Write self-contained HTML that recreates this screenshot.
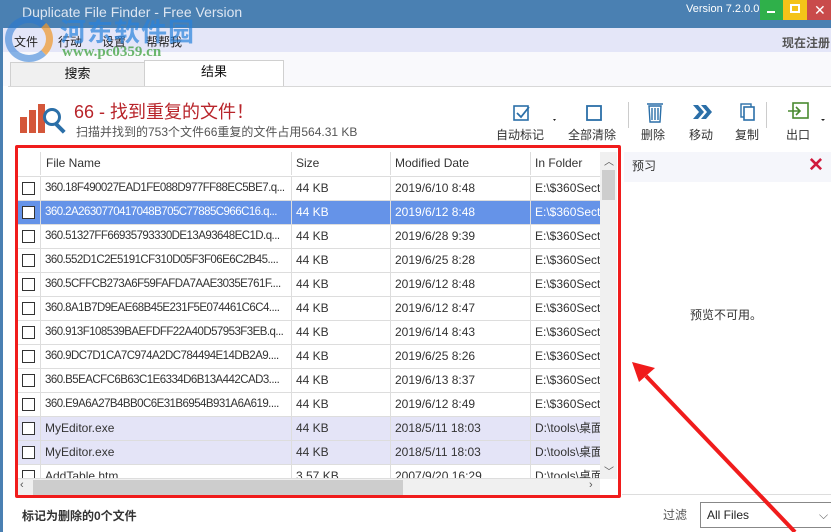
<!DOCTYPE html>
<html><head><meta charset="utf-8"><style>
*{margin:0;padding:0;box-sizing:border-box}
body{width:831px;height:532px;overflow:hidden;position:relative;background:#fff;font-family:"Liberation Sans","Noto Sans CJK SC",sans-serif;font-size:12px;color:#333}
.a{position:absolute;white-space:nowrap}
.row{position:absolute;left:18px;width:582px;height:24px;border-bottom:1px solid #ddd;font-size:12px;color:#333}
.row div{position:absolute;top:0;height:23px;line-height:23px;border-right:1px solid #ddd;overflow:hidden;padding-left:4px}
.cb{left:0;width:23px}.cb i{position:absolute;left:4px;top:5px;width:13px;height:13px;border:1px solid #333;background:#fff}
.c1{left:23px;width:251px;font-size:11.5px;letter-spacing:-0.55px}.c2{left:274px;width:99px}.c3{left:373px;width:140px}.c4{left:513px;width:80px;border-right:none!important}
.sel{background:#6593e8;color:#fff}.lav{background:#e4e4f7}
</style></head><body>
<div class="a" style="left:0;top:0;width:831px;height:28px;background:#4a80b2"></div>
<div class="a" style="left:22px;top:4px;font-size:14px;color:#dde6f2">Duplicate File Finder - Free Version</div>
<div class="a" style="left:686px;top:3px;font-size:11px;color:#fff">Version 7.2.0.0</div>
<div class="a" style="left:760px;top:0;width:23px;height:20px;background:#2fb04a"><div class="a" style="left:7px;top:11px;width:8px;height:2px;background:#fff"></div></div>
<div class="a" style="left:783px;top:0;width:24px;height:20px;background:#f4c318"><div class="a" style="left:7px;top:4px;width:10px;height:9px;border:2px solid #fff"></div></div>
<div class="a" style="left:807px;top:0;width:24px;height:20px;background:#c94b4b;color:#fff;font-size:14px;line-height:20px;padding-left:7px">✕</div>
<div class="a" style="left:0;top:28px;width:831px;height:24px;background:#e4e6f8"></div>
<div class="a" style="left:14px;top:33px;font-size:12px;color:#222">文件&nbsp;&nbsp;&nbsp;&nbsp;&nbsp;&nbsp;行动&nbsp;&nbsp;&nbsp;&nbsp;&nbsp;&nbsp;设置&nbsp;&nbsp;&nbsp;&nbsp;&nbsp;&nbsp;帮帮我</div>
<div class="a" style="left:782px;top:34px;font-size:12px;font-weight:bold;color:#555">现在注册</div>
<div class="a" style="left:0;top:52px;width:831px;height:34px;background:#f9f9fc"></div>
<div class="a" style="left:10px;top:62px;width:135px;height:25px;background:#f0f0f0;border:1px solid #d0d0d0;text-align:center;line-height:22px;font-size:13px;color:#111">搜索</div>
<div class="a" style="left:144px;top:60px;width:140px;height:27px;background:#fff;border:1px solid #d0d0d0;border-bottom:none;text-align:center;line-height:22px;font-size:13px;color:#111">结果</div>
<div class="a" style="left:8px;top:86px;width:823px;height:1px;background:#d8d8d8"></div>
<div class="a" style="left:0;top:0;width:3px;height:532px;background:#4a80b2"></div>
<!-- watermark -->
<div class="a" style="left:5px;top:16px;width:48px;height:46px;border-radius:50%;border:7px solid rgba(40,120,210,.55);border-right-color:rgba(240,150,40,.7)"></div>
<div class="a" style="left:60px;top:12px;font-size:26px;font-weight:bold;color:rgba(40,130,220,.7);letter-spacing:1px">河东软件园</div>
<div class="a" style="left:62px;top:44px;font-size:15px;font-weight:bold;color:rgba(60,160,60,.75);font-family:'Liberation Serif',serif">www.pc0359.cn</div>
<!-- logo -->
<div class="a" style="left:20px;top:117px;width:7px;height:16px;background:#d4573a"></div>
<div class="a" style="left:29px;top:110px;width:7px;height:23px;background:#d4573a"></div>
<div class="a" style="left:38px;top:104px;width:7px;height:29px;background:#d4573a"></div>
<div class="a" style="left:43px;top:108px;width:18px;height:18px;border-radius:50%;border:3px solid #2b6fa8;background:#fff"></div>
<div class="a" style="left:58px;top:122px;width:4px;height:12px;background:#2b6fa8;transform:rotate(-45deg)"></div>
<div class="a" style="left:74px;top:98px;font-size:18px;color:#b8242a">66 - 找到重复的文件！</div>
<div class="a" style="left:76px;top:123px;font-size:12px;color:#555">扫描并找到的753个文件66重复的文件占用564.31 KB</div>
<!-- toolbar -->
<svg class="a" style="left:510px;top:102px" width="320" height="26" viewBox="0 0 320 26">
<rect x="4" y="4" width="14" height="14" fill="none" stroke="#2b6fa8" stroke-width="1.6"/><path d="M7 11l4 4 8-10" fill="none" stroke="#2b6fa8" stroke-width="1.8"/>
<path d="M43 17l3 0-1.5 2z" fill="#222"/>
<rect x="77" y="4" width="14" height="14" fill="none" stroke="#2b6fa8" stroke-width="1.8"/>
<rect x="118" y="-2" width="1" height="30" fill="#ccc"/>
<path d="M137 2h16M139 4l1 16h10l1-16z M142 6v12M145 6v12M148 6v12" fill="none" stroke="#2b6fa8" stroke-width="1.4"/>
<path d="M183 3l6 7-6 7h5l6-7-6-7zM191 3l6 7-6 7h5l6-7-6-7z" fill="#2b6fa8"/>
<rect x="231" y="2" width="10" height="13" fill="none" stroke="#2b6fa8" stroke-width="1.4"/><rect x="234" y="5" width="10" height="13" fill="#fff" stroke="#2b6fa8" stroke-width="1.6"/>
<rect x="256" y="-2" width="1" height="30" fill="#ccc"/>
<rect x="283" y="1" width="15" height="15" fill="none" stroke="#4a8a30" stroke-width="1.6"/><path d="M278 9h11M286 5l4 4-4 4" fill="none" stroke="#4a8a30" stroke-width="1.6"/>
<path d="M311 17l4 0-2 2z" fill="#222"/>
</svg>
<div class="a" style="left:496px;top:126px;font-size:12px;color:#333">自动标记</div>
<div class="a" style="left:568px;top:126px;font-size:12px;color:#333">全部清除</div>
<div class="a" style="left:641px;top:126px;font-size:12px;color:#333">删除</div>
<div class="a" style="left:689px;top:126px;font-size:12px;color:#333">移动</div>
<div class="a" style="left:735px;top:126px;font-size:12px;color:#333">复制</div>
<div class="a" style="left:786px;top:126px;font-size:12px;color:#333">出口</div>
<!-- table -->
<div class="a" style="left:18px;top:152px;width:582px;height:25px;background:#fff;border-bottom:1px solid #ddd"></div>
<div class="row" style="top:152px;height:25px"><div class="cb"></div><div class="c1" style="padding-left:5px;font-size:12px;letter-spacing:0">File Name</div><div class="c2">Size</div><div class="c3">Modified Date</div><div class="c4">In Folder</div></div>
<div class="row" style="top:177px"><div class="cb"><i></i></div><div class="c1">360.18F490027EAD1FE088D977FF88EC5BE7.q...</div><div class="c2">44 KB</div><div class="c3">2019/6/10 8:48</div><div class="c4">E:\$360Section</div></div>
<div class="row sel" style="top:201px"><div class="cb"><i></i></div><div class="c1">360.2A2630770417048B705C77885C966C16.q...</div><div class="c2">44 KB</div><div class="c3">2019/6/12 8:48</div><div class="c4">E:\$360Section</div></div>
<div class="row" style="top:225px"><div class="cb"><i></i></div><div class="c1">360.51327FF66935793330DE13A93648EC1D.q...</div><div class="c2">44 KB</div><div class="c3">2019/6/28 9:39</div><div class="c4">E:\$360Section</div></div>
<div class="row" style="top:249px"><div class="cb"><i></i></div><div class="c1">360.552D1C2E5191CF310D05F3F06E6C2B45....</div><div class="c2">44 KB</div><div class="c3">2019/6/25 8:28</div><div class="c4">E:\$360Section</div></div>
<div class="row" style="top:273px"><div class="cb"><i></i></div><div class="c1">360.5CFFCB273A6F59FAFDA7AAE3035E761F....</div><div class="c2">44 KB</div><div class="c3">2019/6/12 8:48</div><div class="c4">E:\$360Section</div></div>
<div class="row" style="top:297px"><div class="cb"><i></i></div><div class="c1">360.8A1B7D9EAE68B45E231F5E074461C6C4....</div><div class="c2">44 KB</div><div class="c3">2019/6/12 8:47</div><div class="c4">E:\$360Section</div></div>
<div class="row" style="top:321px"><div class="cb"><i></i></div><div class="c1">360.913F108539BAEFDFF22A40D57953F3EB.q...</div><div class="c2">44 KB</div><div class="c3">2019/6/14 8:43</div><div class="c4">E:\$360Section</div></div>
<div class="row" style="top:345px"><div class="cb"><i></i></div><div class="c1">360.9DC7D1CA7C974A2DC784494E14DB2A9....</div><div class="c2">44 KB</div><div class="c3">2019/6/25 8:26</div><div class="c4">E:\$360Section</div></div>
<div class="row" style="top:369px"><div class="cb"><i></i></div><div class="c1">360.B5EACFC6B63C1E6334D6B13A442CAD3....</div><div class="c2">44 KB</div><div class="c3">2019/6/13 8:37</div><div class="c4">E:\$360Section</div></div>
<div class="row" style="top:393px"><div class="cb"><i></i></div><div class="c1">360.E9A6A27B4BB0C6E31B6954B931A6A619....</div><div class="c2">44 KB</div><div class="c3">2019/6/12 8:49</div><div class="c4">E:\$360Section</div></div>
<div class="row lav" style="top:417px"><div class="cb"><i></i></div><div class="c1" style="font-size:12px;letter-spacing:0">MyEditor.exe</div><div class="c2">44 KB</div><div class="c3">2018/5/11 18:03</div><div class="c4">D:\tools\桌面</div></div>
<div class="row lav" style="top:441px"><div class="cb"><i></i></div><div class="c1" style="font-size:12px;letter-spacing:0">MyEditor.exe</div><div class="c2">44 KB</div><div class="c3">2018/5/11 18:03</div><div class="c4">D:\tools\桌面</div></div>
<div class="row" style="top:465px;height:14px;overflow:hidden"><div class="cb"><i></i></div><div class="c1" style="font-size:12px;letter-spacing:0">AddTable.htm</div><div class="c2">3.57 KB</div><div class="c3">2007/9/20 16:29</div><div class="c4">D:\tools\桌面</div></div>
<div class="a" style="left:600px;top:152px;width:17px;height:327px;background:#f0f0f0"></div>
<div class="a" style="left:602px;top:170px;width:13px;height:30px;background:#cdcdcd"></div>
<div class="a" style="left:604px;top:153px;font-size:10px;color:#555">︿</div>
<div class="a" style="left:604px;top:463px;font-size:10px;color:#555">﹀</div>
<div class="a" style="left:18px;top:479px;width:582px;height:17px;background:#f0f0f0"></div>
<div class="a" style="left:33px;top:480px;width:370px;height:15px;background:#cdcdcd"></div>
<div class="a" style="left:20px;top:479px;font-size:11px;color:#555">‹</div>
<div class="a" style="left:589px;top:479px;font-size:11px;color:#555">›</div>
<div class="a" style="left:15px;top:145px;width:606px;height:353px;border:3px solid #f01c1c;border-radius:2px"></div>
<!-- preview -->
<div class="a" style="left:624px;top:152px;width:207px;height:30px;background:#f5f6fb"></div>
<div class="a" style="left:632px;top:157px;font-size:12px;color:#333">预习</div>
<div class="a" style="left:808px;top:154px;font-size:19px;font-weight:bold;color:#d01a3c">✕</div>
<div class="a" style="left:690px;top:306px;font-size:12px;color:#333">预览不可用。</div>
<div class="a" style="left:622px;top:494px;width:209px;height:1px;background:#ddd"></div>
<!-- bottom -->
<div class="a" style="left:22px;top:507px;font-size:12px;font-weight:bold;color:#333">标记为删除的0个文件</div>
<div class="a" style="left:663px;top:506px;font-size:12px;color:#555">过滤</div>
<div class="a" style="left:700px;top:502px;width:135px;height:26px;border:1px solid #888;background:#fff;font-size:12px;line-height:24px;padding-left:6px;color:#222">All Files<span style="position:absolute;left:118px;top:0;color:#666">⌵</span></div>
<!-- arrow -->
<svg class="a" style="left:0;top:0" width="831" height="532"><path d="M795 532L646 376" stroke="#f01c1c" stroke-width="4"/><path d="M632 362l23 6-16 14z" fill="#f01c1c"/></svg>
</body></html>
